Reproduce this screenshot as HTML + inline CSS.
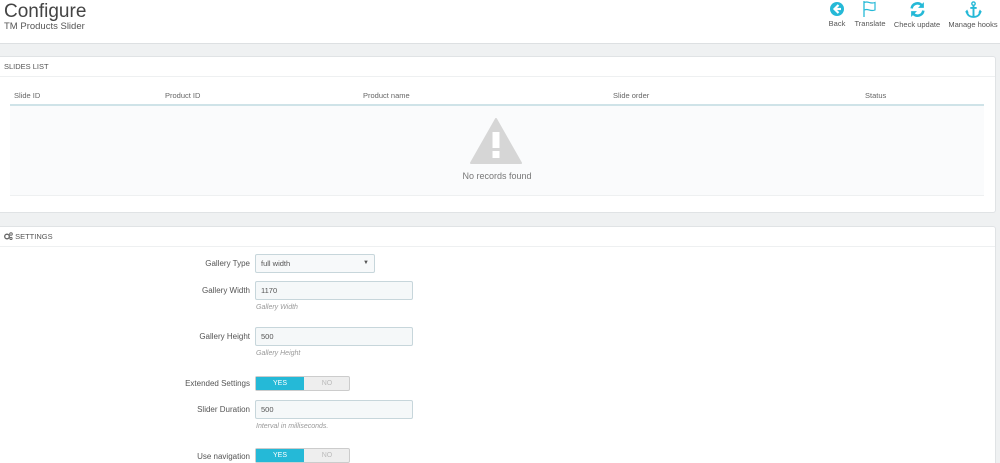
<!DOCTYPE html>
<html><head><meta charset="utf-8"><style>
*{margin:0;padding:0;box-sizing:border-box}
html,body{width:1000px;height:463px;overflow:hidden}
body{background:#eff1f2;font-family:"Liberation Sans",sans-serif;color:#555;position:relative}
.hdr{position:absolute;left:0;top:0;width:1000px;height:44px;background:#fff;border-bottom:1px solid #dde0e2}
.t1{position:absolute;left:4px;top:1px;font-size:19px;color:#444}
.t2{position:absolute;left:4px;top:21px;font-size:9.5px;color:#555}
.tb{position:absolute;top:0;text-align:center;font-size:7.5px;color:#555}
.tb svg{display:block;margin:0 auto 2px}
.panel{position:absolute;left:0;width:996px;background:#fff;border:1px solid #e0e3e5;border-left:none;border-radius:0 3px 3px 0}
.ph{height:20px;line-height:20px;font-size:7.5px;color:#555;padding-left:4px;border-bottom:1px solid #eef0f1}
.th{position:absolute;top:91px;font-size:7.5px;color:#666}
.lbl{position:absolute;right:750px;font-size:8px;color:#555;text-align:right;white-space:nowrap}
.inp{position:absolute;left:255px;width:158px;height:19px;background:#f5f8f9;border:1px solid #c7d6db;border-radius:2px;font-size:7.5px;line-height:17px;padding-left:5px;color:#555}
.help{position:absolute;left:256px;font-size:7px;font-style:italic;color:#999}
.sw{position:absolute;left:255px;width:95px;height:15px;border:1px solid #ccc;background:#eee;border-radius:2px;font-size:7px;color:#bbb}
.sw .y{position:absolute;left:0;top:0;width:48px;height:13px;background:#25b9d7;color:#fff;text-align:center;line-height:13px}
.sw .n{position:absolute;left:48px;top:0;width:46px;height:13px;text-align:center;line-height:13px}
</style></head><body>
<div class="hdr">
<div class="t1">Configure</div>
<div class="t2">TM Products Slider</div>
<div class="tb" style="left:826px;width:22px"><svg width="16" height="16" viewBox="0 0 16 16" style="margin-top:1px"><circle cx="8" cy="8" r="7" fill="#25b9d7"/><path d="M9.5 4 L5.5 8 L9.5 12" stroke="#fff" stroke-width="2.2" fill="none"/><path d="M6 8 H12" stroke="#fff" stroke-width="2.2"/></svg>Back</div>
<div class="tb" style="left:853px;width:34px"><svg width="18" height="17" viewBox="0 0 18 17"><path d="M3 1 V17" stroke="#25b9d7" stroke-width="1.3"/><path d="M3.5 2.5 C7 0.5 9 4.5 14 2.5 V10 C9 12 7 8 3.5 10" stroke="#25b9d7" stroke-width="1.2" fill="none"/></svg>Translate</div>
<div class="tb" style="left:893px;width:48px"><svg width="17" height="17" viewBox="0 0 16 16" style="margin-top:1px"><path d="M2.5 7 A5.5 5.5 0 0 1 12 4" stroke="#25b9d7" stroke-width="2.4" fill="none"/><path d="M14 1 V6.5 H8.5 Z" fill="#25b9d7"/><path d="M13.5 9 A5.5 5.5 0 0 1 4 12" stroke="#25b9d7" stroke-width="2.4" fill="none"/><path d="M2 15 V9.5 H7.5 Z" fill="#25b9d7"/></svg>Check update</div>
<div class="tb" style="left:947px;width:52px"><svg width="17" height="17" viewBox="0 0 16 16" style="margin-top:1px"><circle cx="8" cy="2.5" r="1.6" stroke="#25b9d7" stroke-width="1.3" fill="none"/><path d="M8 4 V15 M5 6.5 H11" stroke="#25b9d7" stroke-width="1.8"/><path d="M1.5 9.5 C2 13.5 5 15 8 15 C11 15 14 13.5 14.5 9.5" stroke="#25b9d7" stroke-width="1.8" fill="none"/><path d="M0 10.5 L2 8 L3.5 11 Z M16 10.5 L14 8 L12.5 11 Z" fill="#25b9d7"/></svg>Manage hooks</div>
</div>

<div class="panel" style="top:56px;height:157px">
<div class="ph">SLIDES LIST</div>
</div>
<div class="th" style="left:14px">Slide ID</div>
<div class="th" style="left:165px">Product ID</div>
<div class="th" style="left:363px">Product name</div>
<div class="th" style="left:613px">Slide order</div>
<div class="th" style="left:865px">Status</div>
<div style="position:absolute;left:10px;top:104px;width:974px;height:1.5px;background:#cfe3e8"></div>
<div style="position:absolute;left:10px;top:106px;width:974px;height:90px;background:#fafbfc;border-bottom:1px solid #eef0f1"></div>
<svg style="position:absolute;left:470px;top:118px" width="52" height="46" viewBox="0 0 52 46"><path d="M26 1 L51 45 H1 Z" fill="#d6d6d6" stroke="#d6d6d6" stroke-width="2" stroke-linejoin="round"/><rect x="22.5" y="14" width="7" height="16" fill="#fff"/><rect x="22.5" y="33" width="7" height="7" fill="#fff"/></svg>
<div style="position:absolute;left:440px;top:171px;width:114px;text-align:center;font-size:9px;color:#777">No records found</div>

<div class="panel" style="top:226px;height:250px">
<div class="ph"><svg width="9" height="8" viewBox="0 0 9 8" style="vertical-align:-1px"><circle cx="3" cy="4.5" r="2.3" stroke="#666" stroke-width="1.3" fill="none"/><circle cx="7" cy="2" r="1.3" stroke="#666" stroke-width="1" fill="none"/><circle cx="7" cy="6.5" r="1.1" stroke="#666" stroke-width="1" fill="none"/></svg> SETTINGS</div>
</div>

<div class="lbl" style="top:259px">Gallery Type</div>
<div class="inp" style="top:254px;width:120px;background:#f7f9fa">full width<span style="position:absolute;right:5px;top:0;font-size:6px">▼</span></div>
<div class="lbl" style="top:286px">Gallery Width</div>
<div class="inp" style="top:281px">1170</div>
<div class="help" style="top:304px">Gallery Width</div>
<div class="lbl" style="top:332px">Gallery Height</div>
<div class="inp" style="top:327px">500</div>
<div class="help" style="top:350px">Gallery Height</div>
<div class="lbl" style="top:379px">Extended Settings</div>
<div class="sw" style="top:376px"><div class="y">YES</div><div class="n">NO</div></div>
<div class="lbl" style="top:405px">Slider Duration</div>
<div class="inp" style="top:400px">500</div>
<div class="help" style="top:423px">Interval in milliseconds.</div>
<div class="lbl" style="top:452px">Use navigation</div>
<div class="sw" style="top:448px"><div class="y">YES</div><div class="n">NO</div></div>
</body></html>
